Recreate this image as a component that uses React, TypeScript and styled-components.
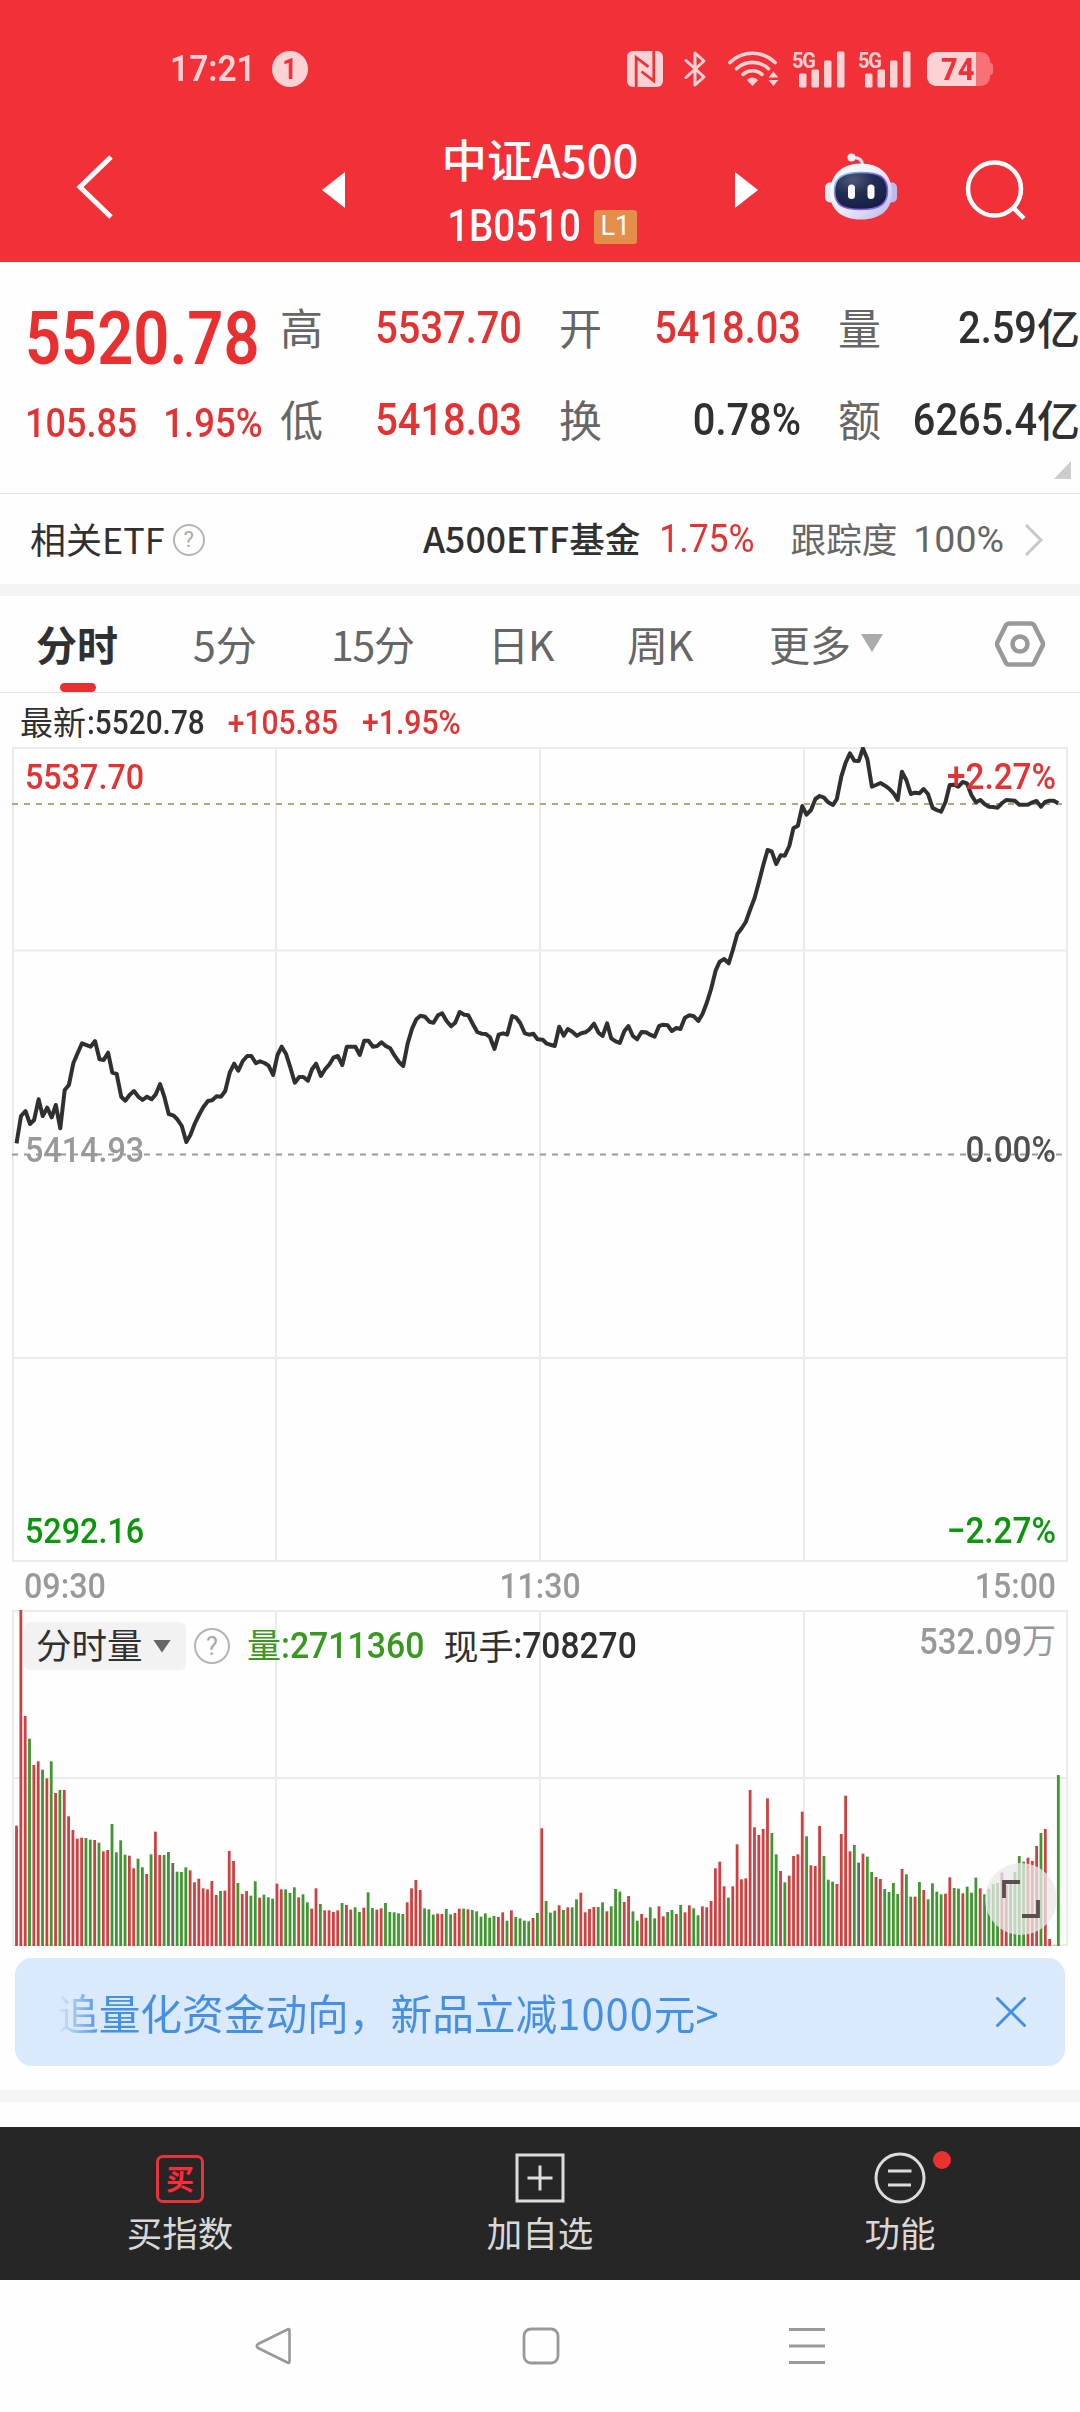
import React from 'react';
import styled, { createGlobalStyle } from 'styled-components';

const RED = '#e33232';
const GREEN = '#0a960a';
const INK = '#303030';
const GREY = '#666';

const cjk = `'Noto Sans CJK SC', 'Noto Sans', sans-serif`;
const latin = `Roboto, 'Noto Sans CJK SC', sans-serif`;

const Global = createGlobalStyle`
  * { box-sizing: border-box; }
  body { margin: 0; background: #fefefe; font-family: ${cjk}; color: ${INK}; }
  svg { display: block; flex: none; }
`;

const Screen = styled.div`
  width: 1080px;
  height: 2412px;
  display: flex;
  flex-direction: column;
  overflow: hidden;
  background: #fefefe;
`;

/* Figures are set tall and narrow; the stretch leaves the advance widths alone. */
const Num = styled.span<{ $size: number; $color?: string; $weight?: number; $tall?: number; $track?: number }>`
  display: inline-block;
  font-family: ${latin};
  font-size: ${p => p.$size}px;
  font-weight: ${p => p.$weight ?? 500};
  letter-spacing: ${p => p.$track ?? 0}px;
  line-height: 1;
  white-space: nowrap;
  color: ${p => p.$color ?? 'inherit'};
  transform: scaleY(${p => p.$tall ?? 1.1});
`;

const Han = styled.span<{ $size: number; $color?: string; $weight?: number }>`
  display: inline-block;
  font-family: ${cjk};
  font-size: ${p => p.$size}px;
  font-weight: ${p => p.$weight ?? 400};
  line-height: 1;
  white-space: nowrap;
  color: ${p => p.$color ?? 'inherit'};
  transform: translateY(-0.05em);
`;

const Spacer = styled.div<{ $w?: number }>`
  ${p => (p.$w === undefined ? 'flex: 1;' : `flex: none; width: ${p.$w}px;`)}
`;

/* ---------- header ---------- */

const Header = styled.header`
  height: 262px;
  flex: none;
  background: #f23038;
  color: #fff;
`;

const StatusBar = styled.div`
  height: 112px;
  padding: 26px 87px 0 170px;
  display: flex;
  align-items: center;
  color: #fcd3d5;
`;

const Notice = styled.span`
  width: 36px;
  height: 36px;
  margin-left: 16px;
  border-radius: 50%;
  background: #fcd3d5;
  color: #f23038;
  display: flex;
  align-items: center;
  justify-content: center;
`;

const Network = styled.div`
  position: relative;
  width: 52px;
  height: 37px;
  margin-left: 14px;
`;

const NetworkTag = styled.span`
  position: absolute;
  left: -1px;
  top: -2px;
  font: 700 20px/22px ${latin};
  letter-spacing: -1.2px;
  transform: scaleY(1.12);
`;

const Battery = styled.div`
  width: 63px;
  height: 34px;
  margin-left: 16px;
  border-radius: 9px;
  background: linear-gradient(90deg, #fcd3d5 49px, #f77176 49px);
  color: #f23038;
  display: flex;
  align-items: center;
  padding-left: 14px;
`;

const BatteryTip = styled.div`
  width: 3px;
  height: 12px;
  border-radius: 0 3px 3px 0;
  background: #f77176;
`;

const TitleBar = styled.div`
  height: 150px;
  display: flex;
  align-items: center;
`;

const TitleBlock = styled.div`
  width: 390px;
  height: 150px;
  display: flex;
  flex-direction: column;
  align-items: center;
  padding-top: 26px;
`;

const CodeLine = styled.div`
  display: flex;
  align-items: center;
  gap: 13px;
  margin-top: 25px;
  padding-left: 4px;
  height: 36px;
`;

const Lowered = styled.div`
  margin-top: 6px;
`;

const Level = styled.span`
  width: 43px;
  height: 34px;
  border-radius: 3px;
  background: #e38e4b;
  display: flex;
  align-items: center;
  justify-content: center;
`;

const Nfc = () => (
  <svg width="36" height="36" viewBox="0 0 36 36" fill="none">
    <rect width="36" height="36" rx="6" fill="#fcd3d5" />
    <path d="M9.2 36V6.5L21.5 15.8M26.8 0V30L14.5 20.5" stroke="#f23038" strokeWidth="2.8" />
  </svg>
);

const Bluetooth = () => (
  <svg width="22" height="36" viewBox="0 0 22 36" fill="none" stroke="#fcd3d5" strokeWidth="3" strokeLinejoin="round" strokeLinecap="round">
    <path d="M2 9.5 20 26 11 34V2l9 8L2 26.5" />
  </svg>
);

const Wifi = () => (
  <svg width="51" height="38" viewBox="0 0 51 38" fill="none">
    <g stroke="#fcd3d5" strokeWidth="3.6" strokeLinecap="round">
      <path d="M2 12.5A32 32 0 0 1 47 12.5" />
      <path d="M8.5 18.7A23.5 23.5 0 0 1 40.5 18.7" />
      <path d="M15 24.3A14.5 14.5 0 0 1 34 24.3" />
    </g>
    <g fill="#fcd3d5">
      <path d="M18.8 30Q24.5 25 30.2 30L24.5 36Z" />
      <path d="M40.5 27.5H50.3L45.4 21.5ZM40.5 30H50.3L45.4 36Z" />
    </g>
  </svg>
);

const Signal = () => (
  <Network>
    <NetworkTag>5G</NetworkTag>
    <svg width="52" height="37" viewBox="0 0 52 37" fill="#fcd3d5">
      <rect x="6" y="22.500" width="7.500" height="14" rx="1.500" />
      <rect x="18.500" y="18.500" width="7.500" height="18" rx="1.500" />
      <rect x="31" y="9.500" width="7.500" height="27" rx="1.500" />
      <rect x="44" y=".5" width="7.500" height="36" rx="1.500" />
    </svg>
  </Network>
);

const Robot = () => (
  <svg width="72" height="68" viewBox="0 0 72 68" fill="none">
    <defs>
      <linearGradient id="shell" x1="0" y1="0" x2="1" y2="1">
        <stop offset="0" stopColor="#fff" />
        <stop offset=".5" stopColor="#eeeefb" />
        <stop offset="1" stopColor="#b9b4ea" />
      </linearGradient>
      <linearGradient id="rim" x1="0" y1="0" x2="1" y2="1">
        <stop offset="0" stopColor="#7fe0ee" />
        <stop offset=".5" stopColor="#7a55dc" />
        <stop offset="1" stopColor="#8c6cf0" />
      </linearGradient>
      <radialGradient id="visor" cx=".35" cy=".2" r=".8">
        <stop offset="0" stopColor="#4c5879" />
        <stop offset=".5" stopColor="#222c52" />
        <stop offset="1" stopColor="#161e43" />
      </radialGradient>
    </defs>
    <path d="M37.500 12C37.500 7 34.500 4.500 28 4.500" stroke="#e4dff5" strokeWidth="3" />
    <circle cx="26.500" cy="4.500" r="4" fill="#f2effc" />
    <rect x="0" y="29.500" width="12" height="20" rx="5" fill="#e9e8f8" />
    <rect x="60" y="29.500" width="12" height="20" rx="5" fill="#bdbbea" />
    <path d="M36 10.500C55 10.500 67 22 67 40C67 57 55 66.500 36 66.500C17 66.500 5 57 5 40C5 22 17 10.500 36 10.500Z" fill="url(#shell)" />
    <path d="M36 19.500C54 19.500 62.500 24 62.500 38C62.500 52 54 56.500 36 56.500C18 56.500 9.500 52 9.500 38C9.500 24 18 19.500 36 19.500Z" fill="url(#visor)" stroke="url(#rim)" strokeWidth="1.600" />
    <rect x="23" y="31.500" width="7" height="14.500" rx="3.500" fill="#fff" />
    <rect x="42.500" y="31.500" width="7" height="14.500" rx="3.500" fill="#fff" />
  </svg>
);

/* ---------- quote ---------- */

const Quote = styled.section`
  height: 232px;
  flex: none;
  display: flex;
  border-bottom: 1px solid #e6e6e6;
  position: relative;
`;

const PriceBlock = styled.div`
  width: 280px;
  padding: 40px 0 0 25px;
`;

const PriceRow = styled.div<{ $h: number }>`
  height: ${p => p.$h}px;
  display: flex;
  align-items: center;
`;

const Stats = styled.div`
  flex: 1;
  display: grid;
  grid-template-columns: repeat(3, 242px);
  grid-template-rows: 92px 92px;
  column-gap: 37px;
  padding-top: 20px;
`;

const Stat = styled.div`
  display: flex;
  align-items: center;
  justify-content: space-between;
`;

const Value = styled.div`
  display: flex;
  align-items: center;
`;

const ExpandCorner = styled.div`
  position: absolute;
  right: 9px;
  bottom: 14px;
  width: 17px;
  height: 18px;
  background: #ccc;
  clip-path: polygon(100% 0, 100% 100%, 0 100%);
`;

const EtfRow = styled.section`
  height: 90px;
  flex: none;
  display: flex;
  align-items: center;
  padding: 2px 37px 0 30px;
`;

const Band = styled.div`
  height: 12px;
  flex: none;
  background: #f4f4f4;
`;

const Help = styled.span<{ $size: number }>`
  width: ${p => p.$size}px;
  height: ${p => p.$size}px;
  flex: none;
  border: 2px solid #b5b5b5;
  border-radius: 50%;
  color: #aaa;
  display: flex;
  align-items: center;
  justify-content: center;
  font: 400 ${p => Math.round(p.$size * 0.7)}px/1 ${latin};
`;

/* ---------- tabs ---------- */

const Tabs = styled.nav`
  height: 97px;
  flex: none;
  border-bottom: 1px solid #e2e2e2;
  display: flex;
  align-items: stretch;
  padding: 0 35px 0 36px;
`;

const Tab = styled.div<{ $w: number; $active?: boolean; $track?: number }>`
  width: ${p => p.$w}px;
  padding-bottom: 2px;
  position: relative;
  display: flex;
  align-items: center;
  font: ${p => (p.$active ? 700 : 400)} 41px/1 ${cjk};
  letter-spacing: ${p => p.$track ?? 0}px;
  color: ${p => (p.$active ? INK : GREY)};
  white-space: nowrap;
  ${p =>
    p.$active &&
    `&::after {
      content: '';
      position: absolute;
      left: 24px;
      bottom: 0;
      width: 36px;
      height: 9px;
      border-radius: 5px;
      background: #e93030;
    }`}
`;

const Down = styled.i<{ $w: number; $h: number; $color: string }>`
  width: ${p => p.$w}px;
  height: ${p => p.$h}px;
  background: ${p => p.$color};
  clip-path: polygon(0 0, 100% 0, 50% 100%);
`;

const Latest = styled.div`
  height: 54px;
  flex: none;
  display: flex;
  align-items: center;
  padding: 6px 0 0 20px;
`;

/* ---------- charts ---------- */

const ChartPanel = styled.section<{ $h: number }>`
  position: relative;
  height: ${p => p.$h}px;
  flex: none;
`;

const ChartLabel = styled.div<{ $y: number; $side?: 'left' | 'right' }>`
  position: absolute;
  ${p => (p.$side === 'right' ? 'right: 24px' : 'left: 25px')};
  top: ${p => p.$y}px;
  height: 40px;
  display: flex;
  align-items: center;
`;

const TimeAxis = styled.div`
  height: 48px;
  flex: none;
  display: grid;
  grid-template-columns: 1fr 1fr 1fr;
  align-items: center;
  padding: 0 24px;
  color: #999;
  & > :nth-child(2) { justify-self: center; }
  & > :nth-child(3) { justify-self: end; }
`;

const VolumeHead = styled.div`
  position: absolute;
  left: 24px;
  right: 25px;
  top: 12px;
  height: 48px;
  display: flex;
  align-items: center;
`;

const Picker = styled.div`
  width: 162px;
  height: 48px;
  border-radius: 6px;
  background: #f2f2f2;
  display: flex;
  align-items: center;
  justify-content: space-between;
  padding: 0 15px 0 12px;
`;

const Fullscreen = styled.div`
  position: absolute;
  left: 985px;
  top: 253px;
  width: 72px;
  height: 72px;
  border-radius: 50%;
  background: rgba(232, 232, 232, 0.76);
  display: flex;
  align-items: center;
  justify-content: center;
`;

/* Minute line: horizontal units are 1/2.904 px, vertical units 1/3 px. */
const morning =
  '48,1240 61,1158 74,1143 87,1182 99,1170 112,1108 124,1158 137,1133 150,1162 162,1125 175,1195 188,1080 200,1065 213,1000 226,968 238,940 263,950 276,933 289,988 301,990 314,968 326,1028 339,1032 352,1100 364,1112 377,1094 389,1083 402,1100 414,1110 427,1100 440,1108 452,1094 465,1062 478,1103 490,1152 503,1156 515,1168 528,1188 541,1236 553,1215 566,1180 578,1155 590,1132 604,1113 616,1111 629,1099 642,1100 654,1083 667,1028 680,1001 692,1022 705,993 718,978 730,978 743,1000 755,994 768,999 780,1007 793,1035 806,975 818,950 831,973 843,1012 856,1058 869,1041 881,1041 894,1052 906,1018 918,1001 932,1038 944,1018 957,1003 969,982 981,978 994,1005 1007,950 1032,950 1045,975 1058,932 1070,932 1083,950 1095,948 1108,937 1120,948 1133,955 1146,977 1158,995 1171,1008 1184,940 1197,895 1209,868 1221,857 1234,860 1247,875 1259,878 1272,856 1284,850 1297,873 1310,889 1322,878 1335,846 1348,854 1360,856 1373,882 1386,906 1398,911 1411,912 1423,922 1436,957 1448,914 1461,910 1473,914 1487,858 1499,863 1511,880 1524,910 1537,914 1549,911 1561,928';
const afternoon =
  '8,929 20,941 33,945 43,948 56,890 69,917 81,897 94,905 107,917 120,910 132,907 144,898 157,881 170,908 182,918 195,880 207,925 220,934 232,939 245,904 257,888 270,918 282,928 295,906 308,907 320,914 333,920 346,888 358,884 371,886 383,903 396,894 408,897 421,863 434,856 447,859 460,873 472,852 484,820 497,777 510,722 522,695 535,687 548,700 560,660 573,612 586,595 598,575 610,540 623,505 636,455 648,407 661,360 673,364 686,402 699,376 711,377 724,348 736,295 749,287 762,228 774,254 787,240 800,207 812,198 825,203 837,217 851,225 862,207 875,140 887,100 900,70 913,92 926,93 938,55 951,88 964,170 976,165 989,159 1002,167 1014,176 1027,190 1039,210 1051,125 1064,150 1077,192 1089,188 1102,190 1114,177 1127,192 1140,233 1152,240 1165,245 1178,215 1190,165 1203,164 1215,170 1228,156 1240,160 1253,195 1266,217 1279,210 1291,222 1304,230 1316,231 1329,233 1342,219 1354,210 1379,212 1392,224 1417,224 1430,217 1442,213 1455,230 1467,216 1480,212 1492,212 1505,220';

const toLine = (s: string, dx: number) =>
  s.split(' ').map(p => {
    const [x, y] = p.split(',').map(Number);
    return `${((x + dx) / 2.904).toFixed(1)},${(y / 3 - 17).toFixed(1)}`;
  });
const pricePoints = [...toLine(morning, 0), ...toLine(afternoon, 1568)].join(' ');

/* One entry per minute: top edge of the bar, then r (rise), g (fall) or k (flat). */
const volume =
  '857r 210r 528r 596g 675r 664r 689g 715r 664g 759r 750g 750r 829r 870r 896r 893r 894g 899g 900r 908g 934r 930r 852g 937g 901g 944g 947r 985r 956g 982g 1002r 943g 875r 945r 945g 936g 969k 995g 996g 982g 991r 1027r 1016r 1045r 1048r 1023r 1065r 1053g 1052r 933r 963r 1029g 1062r 1053r 1067g 1024g 1073r 1064g 1072g 1076g 1031r 1048r 1048g 1059g 1042g 1072r 1063g 1087g 1106r 1045r 1092g 1111r 1111r 1116r 1111r 1089g 1095r 1109r 1102g 1116g 1103r 1057g 1104g 1109r 1105r 1089g 1116g 1117g 1120g 1122g 1087r 1045r 1020r 1050r 1105g 1108g 1124g 1121r 1122r 1107g 1123g 1119r 1106r 1106g 1108r 1110g 1114g 1130g 1120g 1133g 1128g 1131r 1117r 1142g 1111r 1131g 1135g 1142g 1144g 1134r 1119g 865r 1083g 1118g 1112g 1096r 1110g 1102r 1102g 1078g 1058r 1117r 1107r 1101r 1101g 1087g 1114r 1099g 1047g 1055g 1086r 1068r 1114g 1142g 1122r 1133r 1102g 1135g 1099r 1129r 1116g 1110g 1122r 1095g 1117r 1096r 1105g 1126g 1099r 1102r 1083r 985r 965r 1039r 1073g 1039r 913r 1018r 1015r 750r 862r 885r 867r 775r 879g 943g 993r 1027g 1007r 948r 943r 815r 889g 976r 978r 858r 948g 1019g 1025g 1032r 882r 767r 934r 915g 968k 941r 950g 996g 1011r 1017r 1047g 1056g 1029g 1062g 987r 1003g 1070g 1070r 1026g 1050r 1078g 1030g 1055g 1063g 1061r 1012r 1044g 1046g 1060r 1040g 1058g 1013g 1045r 1063g 1046g 1032g 1029g 998r 1035r 1020g 996g 948g 965g 953r 963r 918r 879g 867r 1197r 1217k 705g'.split(' ');
const barColor: Record<string, string> = { r: '#d04040', g: '#3f9730', k: '#666' };

const columns = [13, 276, 540, 804, 1067];

const PriceChart = () => (
  <svg width="1080" height="815" viewBox="0 0 1080 815" fill="none">
    <g stroke="#ebebeb" strokeWidth="2">
      {columns.map(x => <path key={x} d={`M${x} 1V814`} />)}
      <path d="M12 1H1068M12 203.500H1068M12 611H1068M12 814H1068" />
    </g>
    <path d="M12 57H1063" stroke="#b5a67c" strokeWidth="2" strokeDasharray="6 6" />
    <path d="M12 407.500H1063" stroke="#999" strokeWidth="2" strokeDasharray="6 6" />
    <polyline points={pricePoints} stroke="#303030" strokeWidth="4" strokeLinejoin="round" />
  </svg>
);

const VolumeChart = () => (
  <svg width="1080" height="336" viewBox="0 0 1080 336" fill="none">
    <g stroke="#ebebeb" strokeWidth="2">
      {columns.map(x => <path key={x} d={`M${x} 1V335`} />)}
      <path d="M12 1H1068M12 168H1068M12 335H1068" />
    </g>
    {volume.map((v, i) => {
      const top = (parseInt(v, 10) - 210) / 3;
      return <rect key={i} x={15.1 + i * 4.341} y={top} width="2.800" height={336 - top} fill={barColor[v.slice(-1)]} />;
    })}
  </svg>
);

/* ---------- bottom ---------- */

const Banner = styled.section`
  height: 108px;
  flex: none;
  margin: 12px 15px 24px;
  padding: 0 39px 0 42px;
  border-radius: 17px;
  background: #dae9fb;
  color: #4590e2;
  display: flex;
  align-items: center;
  justify-content: space-between;
`;

const Ticker = styled.div`
  font: 400 41.7px/60px ${cjk};
  white-space: nowrap;
  mask-image: linear-gradient(90deg, transparent 0, #000 44px);
`;

const Amount = styled.span`
  letter-spacing: 1px;
`;

const ActionBar = styled.nav`
  height: 153px;
  flex: none;
  margin-top: 25px;
  background: #262626;
  color: #d8d8d8;
  display: grid;
  grid-template-columns: repeat(3, 1fr);
`;

const Action = styled.div`
  display: flex;
  flex-direction: column;
  align-items: center;
  padding-top: 24px;
  gap: 11px;
`;

const IconBox = styled.div`
  position: relative;
  width: 52px;
  height: 54px;
  display: flex;
  align-items: center;
  justify-content: center;
`;

const BuyMark = styled.span`
  width: 48px;
  height: 48px;
  margin-top: 2px;
  border: 3px solid #ea3338;
  border-radius: 7px;
  color: #ff2d3c;
  display: flex;
  align-items: center;
  justify-content: center;
`;

const Dot = styled.i`
  position: absolute;
  right: -25px;
  top: 0;
  width: 18px;
  height: 18px;
  border-radius: 50%;
  background: #ea3030;
`;

const SystemNav = styled.nav`
  flex: 1;
  display: flex;
  align-items: center;
  padding: 0 255px;
  justify-content: space-between;
`;

const stats = [
  { name: '高', value: '5537.70', color: RED },
  { name: '开', value: '5418.03', color: RED },
  { name: '量', value: '2.59', unit: '亿' },
  { name: '低', value: '5418.03', color: RED },
  { name: '换', value: '0.78%' },
  { name: '额', value: '6265.4', unit: '亿' },
];

export default function App() {
  return (
    <Screen>
      <Global />
      <Header>
        <StatusBar>
          <Num $size={33.5} $tall={1.13} $weight={600}>17:21</Num>
          <Notice><Num $size={26} $weight={700}>1</Num></Notice>
          <Spacer />
          <Nfc />
          <Spacer $w={21} />
          <Bluetooth />
          <Spacer $w={22} />
          <Wifi />
          <Signal />
          <Signal />
          <Battery><Num $size={29} $weight={800} $tall={1.08}>74</Num></Battery>
          <BatteryTip />
        </StatusBar>
        <TitleBar>
          <Spacer $w={75} />
          <svg width="40" height="66" viewBox="0 0 40 66" fill="none" stroke="#fff" strokeWidth="5">
            <path d="M36 3 5 33 36 63" />
          </svg>
          <Spacer $w={207} />
          <Lowered>
            <svg width="23" height="36" viewBox="0 0 23 36" fill="#fff"><path d="M23 0V36L0 18Z" /></svg>
          </Lowered>
          <TitleBlock>
            <Han $size={45.5} $weight={500}>中证A500</Han>
            <CodeLine>
              <Num $size={38.5} $tall={1.13}>1B0510</Num>
              <Level><Num $size={27} $weight={400} $tall={1}>L1</Num></Level>
            </CodeLine>
          </TitleBlock>
          <Lowered>
            <svg width="23" height="36" viewBox="0 0 23 36" fill="#fff"><path d="M0 0V36L23 18Z" /></svg>
          </Lowered>
          <Spacer $w={67} />
          <Robot />
          <Spacer $w={68} />
          <Lowered>
            <svg width="62" height="62" viewBox="0 0 62 62" fill="none" stroke="#fff" strokeWidth="4.500">
              <circle cx="29.500" cy="30" r="26.500" />
              <path d="M48 48.500 59 59.500" />
            </svg>
          </Lowered>
        </TitleBar>
      </Header>

      <Quote>
        <PriceBlock>
          <PriceRow $h={76}><Num $size={63.2} $color="#e93030" $weight={600} $tall={1.16}>5520.78</Num></PriceRow>
          <PriceRow $h={90}>
            <Num $size={36} $color={RED} $tall={1.15}>105.85</Num>
            <Spacer $w={26} />
            <Num $size={36.5} $color={RED} $tall={1.13}>1.95%</Num>
          </PriceRow>
        </PriceBlock>
        <Stats>
          {stats.map(s => (
            <Stat key={s.name}>
              <Han $size={43} $color={GREY}>{s.name}</Han>
              <Value>
                <Num $size={39.8} $color={s.color} $tall={1.13}>{s.value}</Num>
                {s.unit && <Han $size={43} $weight={500}>{s.unit}</Han>}
              </Value>
            </Stat>
          ))}
        </Stats>
        <ExpandCorner />
      </Quote>

      <EtfRow>
        <Han $size={36}>相关ETF</Han>
        <Spacer $w={8} />
        <Help $size={32}>?</Help>
        <Spacer />
        <Han $size={35.6} $weight={500}>A500ETF基金</Han>
        <Spacer $w={19} />
        <Num $size={35.5} $color={RED} $weight={400}>1.75%</Num>
        <Spacer $w={36} />
        <Han $size={35.6} $color={GREY}>跟踪度</Han>
        <Spacer $w={16} />
        <Num $size={37.5} $color={GREY} $weight={400} $tall={1}>100%</Num>
        <Spacer $w={20} />
        <svg width="19" height="34" viewBox="0 0 19 34" fill="none" stroke="#c8c8c8" strokeWidth="3"><path d="M2 2 17 17 2 32" /></svg>
      </EtfRow>
      <Band />

      <Tabs>
        <Tab $w={157} $active>分时</Tab>
        <Tab $w={138}>5分</Tab>
        <Tab $w={157} $track={-1.3}>15分</Tab>
        <Tab $w={139} $track={-1}>日K</Tab>
        <Tab $w={142} $track={-1}>周K</Tab>
        <Tab $w={200}>更多<Spacer $w={10} /><Down $w={22} $h={18} $color="#aaa" /></Tab>
        <Spacer />
        <Value>
          <svg width="50" height="46" viewBox="0 0 50 46" fill="none" stroke="#999" strokeWidth="4.500" strokeLinejoin="round">
            <path d="M14 2.500H36Q38 2.500 39 4L47.500 21Q48.500 23 47.500 25L39 42Q38 43.500 36 43.500H14Q12 43.500 11 42L2.500 25Q1.500 23 2.500 21L11 4Q12 2.500 14 2.500Z" />
            <circle cx="25" cy="23" r="7.500" />
          </svg>
        </Value>
      </Tabs>

      <Latest>
        <Han $size={33}>最新</Han>
        <Spacer $w={1} />
        <Num $size={29.8} $tall={1.12}>:5520.78</Num>
        <Spacer $w={23} />
        <Num $size={30} $color={RED} $tall={1.12}>+105.85</Num>
        <Spacer $w={24} />
        <Num $size={30.2} $color={RED} $tall={1.12}>+1.95%</Num>
      </Latest>

      <ChartPanel $h={815}>
        <PriceChart />
        <ChartLabel $y={10}><Num $size={32.3} $color={RED}>5537.70</Num></ChartLabel>
        <ChartLabel $y={10} $side="right"><Num $size={33.3} $color={RED}>+2.27%</Num></ChartLabel>
        <ChartLabel $y={383}><Num $size={32.3} $color="#999">5414.93</Num></ChartLabel>
        <ChartLabel $y={383} $side="right"><Num $size={33.3} $color="#505050">0.00%</Num></ChartLabel>
        <ChartLabel $y={764}><Num $size={32.3} $color={GREEN}>5292.16</Num></ChartLabel>
        <ChartLabel $y={764} $side="right"><Num $size={33.3} $color={GREEN}>−2.27%</Num></ChartLabel>
      </ChartPanel>

      <TimeAxis>
        <Num $size={32.3}>09:30</Num>
        <Num $size={32}>11:30</Num>
        <Num $size={32}>15:00</Num>
      </TimeAxis>

      <ChartPanel $h={336}>
        <VolumeChart />
        <VolumeHead>
          <Picker>
            <Han $size={35.5}>分时量</Han>
            <Down $w={18} $h={13} $color="#666" />
          </Picker>
          <Spacer $w={8} />
          <Help $size={36}>?</Help>
          <Spacer $w={17} />
          <Han $size={34} $color="#389820">量</Han>
          <Num $size={33.8} $color="#389820">:2711360</Num>
          <Spacer $w={19} />
          <Han $size={35}>现手</Han>
          <Num $size={33.6}>:708270</Num>
        </VolumeHead>
        <ChartLabel $y={11} $side="right">
          <Num $size={33} $color="#999">532.09</Num>
          <Han $size={34} $color="#999">万</Han>
        </ChartLabel>
        <Fullscreen>
          <svg width="38" height="38" viewBox="0 0 38 38" fill="none" stroke="#594f50" strokeWidth="3.800">
            <path d="M2 18V2H18M20 36H36V20" />
          </svg>
        </Fullscreen>
      </ChartPanel>

      <Banner>
        <Ticker>追量化资金动向，新品立减<Amount>1000</Amount>元&gt;</Ticker>
        <svg width="30" height="30" viewBox="0 0 30 30" stroke="#4590e2" strokeWidth="3" strokeLinecap="round"><path d="M1.500 1.500 28.500 28.500M28.500 1.500 1.500 28.500" /></svg>
      </Banner>
      <Band />

      <ActionBar>
        <Action>
          <IconBox><BuyMark><Han $size={28} $weight={700}>买</Han></BuyMark></IconBox>
          <Han $size={35.5}>买指数</Han>
        </Action>
        <Action>
          <IconBox>
            <svg width="50" height="50" viewBox="0 0 50 50" fill="none" stroke="#dcdcdc" strokeWidth="3">
              <path d="M2 2H48V48H2ZM25 12.500V37.500M12.500 25H37.500" />
            </svg>
          </IconBox>
          <Han $size={35.5}>加自选</Han>
        </Action>
        <Action>
          <IconBox>
            <svg width="52" height="52" viewBox="0 0 52 52" fill="none" stroke="#dcdcdc" strokeWidth="3">
              <circle cx="26" cy="26" r="24" />
              <path d="M14 19H37.500M14 33H37" />
            </svg>
            <Dot />
          </IconBox>
          <Han $size={35.5}>功能</Han>
        </Action>
      </ActionBar>

      <SystemNav>
        <svg width="37" height="38" viewBox="0 0 37 38" fill="none" stroke="#999" strokeWidth="2.600" strokeLinejoin="round">
          <path d="M34.500 3.500V34.500Q34.500 36.500 32.500 35.500L3 21Q0.500 19 3 17L32.500 2.500Q34.500 1.500 34.500 3.500Z" />
        </svg>
        <svg width="38" height="38" viewBox="0 0 38 38" fill="none" stroke="#999" strokeWidth="2.800">
          <rect x="2" y="2" width="34" height="34" rx="7" />
        </svg>
        <svg width="36" height="38" viewBox="0 0 36 38" stroke="#999" strokeWidth="3"><path d="M0 2.500H36M0 19H36M0 35.500H36" /></svg>
      </SystemNav>
    </Screen>
  );
}
